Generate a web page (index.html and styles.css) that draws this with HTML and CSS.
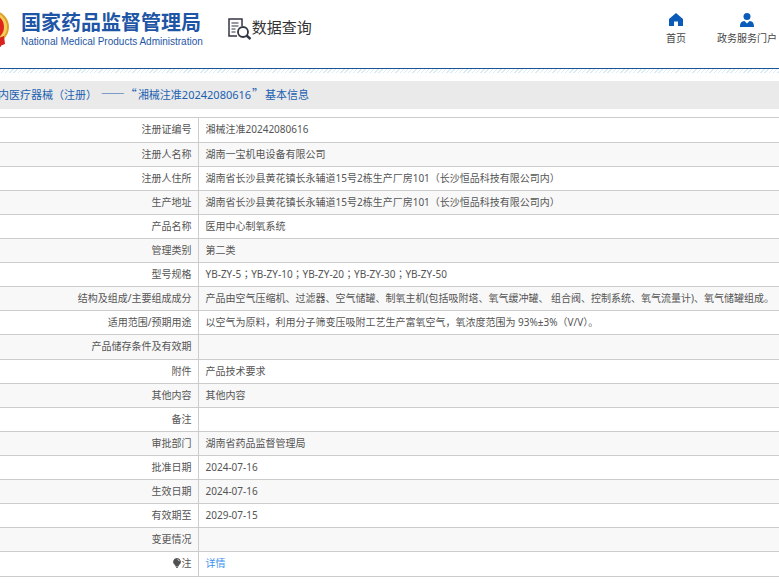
FILE: index.html
```html
<!DOCTYPE html>
<html lang="zh-CN">
<head>
<meta charset="utf-8">
<title>国家药品监督管理局 数据查询</title>
<link rel="stylesheet" href="styles.css">
</head>
<body>
<header class="site-header">
  <a class="brand" href="#">
    <svg class="emblem" viewBox="0 0 36 38" aria-hidden="true">
      <path d="M8 26h20v11l-5-2-5 2-5-2-5 2z" fill="#d8231c"/>
      <ellipse cx="18" cy="17" rx="18" ry="17" fill="#dda02c"/>
      <ellipse cx="18" cy="17" rx="16" ry="15" fill="#f5cf58"/>
      <ellipse cx="18" cy="17" rx="13" ry="13" fill="#e0261c"/>
      <path d="M23 29l8-3 1 8-5 2-4-1z" fill="#d8231c"/>
    </svg>
    <span class="brand-text">
      <span class="brand-cn">国家药品监督管理局</span>
      <span class="brand-en">National Medical Products Administration</span>
    </span>
  </a>
  <a class="section" href="#">
    <svg class="section-icon" viewBox="0 0 24 22" aria-hidden="true" fill="none" stroke="#333744">
      <path d="M14 5V1H1v17h8M14 1v7" stroke-width="1.500"/>
      <path d="M3.500 5h7M3.500 8h7M3.500 11h4M3.500 14h4" stroke-width="1.200"/>
      <circle cx="15" cy="14" r="5" stroke-width="1.800"/>
      <path d="M18.500 17.500l4 3.500" stroke-width="2.400"/>
    </svg>
    <span>数据查询</span>
  </a>
  <nav class="nav">
    <a href="#">
      <svg viewBox="0 0 14 14" aria-hidden="true" fill="#0b5cb8"><path d="M7 0l7 6v7H9V8.500H5V13H0V6z"/></svg>
      <span>首页</span>
    </a>
    <a href="#">
      <svg viewBox="0 0 14 14" aria-hidden="true" fill="#0b5cb8"><circle cx="7" cy="3.500" r="3.500"/><path d="M0 14c0-4 1-5.500 4.500-6L7 10.500 9.500 8c3.500.5 4.500 2 4.500 6z"/></svg>
      <span>政务服务门户</span>
    </a>
  </nav>
</header>
<div class="hatch"></div>
<main>
  <h1 class="title">内医疗器械（注册） <span class="wide-marks">——“</span>湘械注准20242080616<span class="wide-marks">”</span>基本信息</h1>
  <table class="info">
    <colgroup><col class="label-col"><col></colgroup>
    <tbody>
      <tr><th scope="row">注册证编号</th><td>湘械注准20242080616</td></tr>
      <tr><th scope="row">注册人名称</th><td>湖南一宝机电设备有限公司</td></tr>
      <tr><th scope="row">注册人住所</th><td>湖南省长沙县黄花镇长永辅道15号2栋生产厂房101（长沙恒品科技有限公司内）</td></tr>
      <tr><th scope="row">生产地址</th><td>湖南省长沙县黄花镇长永辅道15号2栋生产厂房101（长沙恒品科技有限公司内）</td></tr>
      <tr><th scope="row">产品名称</th><td>医用中心制氧系统</td></tr>
      <tr><th scope="row">管理类别</th><td>第二类</td></tr>
      <tr><th scope="row">型号规格</th><td class="centered-marks" lang="zh-TW">YB-ZY-5；YB-ZY-10；YB-ZY-20；YB-ZY-30；YB-ZY-50</td></tr>
      <tr><th scope="row">结构及组成/主要组成成分</th><td>产品由空气压缩机、过滤器、空气储罐、制氧主机(包括吸附塔、氧气缓冲罐、 组合阀、控制系统、氧气流量计)、氧气储罐组成。</td></tr>
      <tr><th scope="row">适用范围/预期用途</th><td>以空气为原料，利用分子筛变压吸附工艺生产富氧空气，氧浓度范围为 93%±3%（V/V）。</td></tr>
      <tr><th scope="row">产品储存条件及有效期</th><td></td></tr>
      <tr><th scope="row">附件</th><td>产品技术要求</td></tr>
      <tr><th scope="row">其他内容</th><td>其他内容</td></tr>
      <tr><th scope="row">备注</th><td></td></tr>
      <tr><th scope="row">审批部门</th><td>湖南省药品监督管理局</td></tr>
      <tr><th scope="row">批准日期</th><td>2024-07-16</td></tr>
      <tr><th scope="row">生效日期</th><td>2024-07-16</td></tr>
      <tr><th scope="row">有效期至</th><td>2029-07-15</td></tr>
      <tr><th scope="row">变更情况</th><td></td></tr>
      <tr><th scope="row"><svg class="bulb" viewBox="0 0 8 10" aria-hidden="true"><path d="M4 0a4 3.800 0 0 1 2 7L5.500 8.500h-3L2 7a4 3.800 0 0 1 2-7z" fill="#505050"/><path d="M3 9.300h2" stroke="#505050"/><path d="M4.500 1.500q1.500.3 1.700 1.700" stroke="#ddd" fill="none"/></svg>注</th><td><a href="#">详情</a></td></tr>
    </tbody>
  </table>
</main>
</body>
</html>
```
FILE: styles.css
```css
* {
  box-sizing: border-box;
}

body {
  margin: 0;
  background: #fff;
  color: #555;
  font-family: "Noto Sans", "Noto Sans CJK SC", sans-serif;
  font-size: 10px;
  line-height: 16px;
  overflow-x: hidden;
}

a {
  text-decoration: none;
}

.site-header {
  display: flex;
  align-items: flex-start;
  height: 69px;
  border-bottom: 1px solid #1c5596;
}

.brand {
  display: flex;
  gap: 12px;
  margin: 10px 0 0 -27px;
  color: #1e56a5;
}

.emblem {
  width: 36px;
  height: 38px;
}

.brand-text {
  display: flex;
  flex-direction: column;
  white-space: nowrap;
}

.brand-cn {
  font-size: 20px;
  font-weight: 700;
  line-height: 25px;
}

.brand-en {
  font-family: "Liberation Sans", sans-serif;
  line-height: 14px;
}

.section {
  display: flex;
  margin: 18px 0 0 25px;
  color: #333;
  font-size: 15px;
  line-height: 18px;
}

.section-icon {
  width: 24px;
  height: 22px;
}

.nav {
  display: flex;
  gap: 31px;
  margin: 13px 2px 0 auto;
}

.nav a {
  display: flex;
  flex-direction: column;
  align-items: center;
  gap: 3px;
  color: #444;
}

.nav svg {
  width: 14px;
  height: 14px;
}

.hatch {
  height: 4px;
  background: repeating-linear-gradient(135deg, #dcebf3 0 1px, #fff 1px 3px);
}

.title {
  margin: 8px 0;
  padding: 4px 0;
  background: #eaeaea;
  color: #1b5fb0;
  font-size: 11px;
  font-weight: 400;
  line-height: 20px;
  text-indent: -2px;
  white-space: nowrap;
}

.info {
  width: 100%;
  border-collapse: collapse;
  table-layout: fixed;
}

.label-col {
  width: 198px;
}

.info tr {
  height: 24px;
}

.info tr:nth-child(9n + 1) {
  height: 25px;
}

.info tr:nth-child(even) {
  background: #f8f8f8;
}

.info th,
.info td {
  padding: 0 7px 2px;
  border: 1px solid #ccc;
  font-weight: 400;
  text-align: left;
  white-space: nowrap;
}

.info th {
  padding-right: 6px;
  border-left: 0;
  text-align: right;
}

.info td {
  border-right: 0;
}

.info a {
  color: #3c94ee;
}

.centered-marks {
  font-family: "Noto Sans", "Noto Sans CJK TC", sans-serif;
}

.wide-marks {
  padding: 0 1px;
  font-family: "Noto Sans CJK SC", sans-serif;
  font-size: 12px;
  line-height: 1;
}

.bulb {
  width: 8px;
  height: 10px;
  margin-right: 1px;
  vertical-align: -1px;
}
```
